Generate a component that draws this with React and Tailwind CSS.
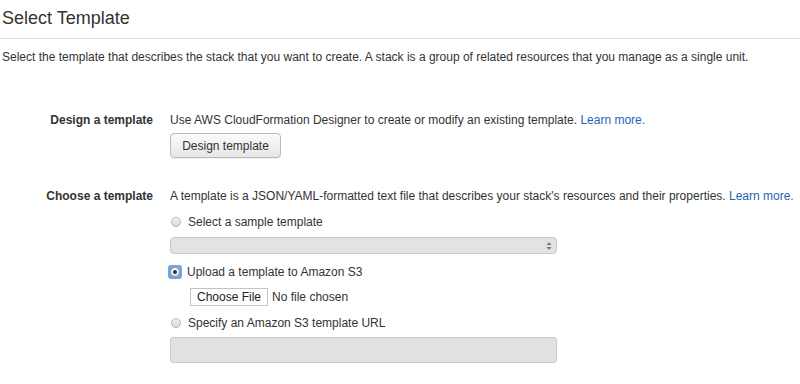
import React from "react";

const Radio = ({ checked }) => {
  if (checked) {
    return (
      <span className="flex items-center justify-center w-[14px] h-[14px] rounded-[3px] bg-[#6fa6e6] mr-[5px] -ml-[2px]">
        <span className="flex items-center justify-center w-[10px] h-[10px] rounded-full bg-gradient-to-b from-[#fdfdfd] to-[#e4e4e4] border border-[#9a9a9a]">
          <span className="w-[4px] h-[4px] rounded-full bg-[#333]"></span>
        </span>
      </span>
    );
  }
  return (
    <span className="w-[10px] h-[10px] rounded-full bg-gradient-to-b from-[#f4f4f4] to-[#d8d8d8] border border-[#b5b5b5] mr-[7px] ml-[1px]"></span>
  );
};

const App = () => {
  return (
    <div
      className="w-[800px] h-[384px] bg-white text-[#333] overflow-hidden"
      style={{ fontFamily: '"Liberation Sans", Arial, sans-serif' }}
    >
      <h1 className="text-[18px] leading-[22px] pt-[7px] pb-[9px] pl-[2px] border-b border-[#dcdcdc] text-[#333]">
        Select Template
      </h1>
      <p className="mt-[10px] pl-[2px] text-[12px] leading-[16px]">
        Select the template that describes the stack that you want to create. A stack is a group of related resources that you manage as a single unit.
      </p>

      <div className="grid grid-cols-[153px_1fr] gap-x-[17px] mt-[47px] text-[12px] leading-[16px]">
        <div className="text-right font-bold">Design a template</div>
        <div className="flex flex-col items-start">
          <div>
            Use AWS CloudFormation Designer to create or modify an existing template.{" "}
            <a className="text-[#1f64b8]">Learn more.</a>
          </div>
          <button className="mt-[5px] h-[25px] w-[111px] rounded-[4px] border border-[#b9b9b9] bg-gradient-to-b from-[#fbfbfb] to-[#e6e6e6] text-[12px] text-[#333] shadow-[0_1px_0_rgba(0,0,0,0.05)]">
            Design template
          </button>
        </div>

        <div className="text-right font-bold mt-[30px]">Choose a template</div>
        <div className="flex flex-col items-start mt-[30px]">
          <div>
            A template is a JSON/YAML-formatted text file that describes your stack's resources and their properties.{" "}
            <a className="text-[#1f64b8]">Learn more.</a>
          </div>

          <label className="flex items-center mt-[10px]">
            <Radio />
            <span>Select a sample template</span>
          </label>
          <div className="mt-[7px] h-[17px] w-[387px] rounded-[4px] border border-[#c9c9c9] bg-[#e3e3e3] flex items-center justify-end pr-[4px]">
            <svg width="6" height="10" viewBox="0 0 6 10">
              <path d="M3 1 L5.5 4 H0.5 Z" fill="#777" />
              <path d="M3 9 L5.5 6 H0.5 Z" fill="#777" />
            </svg>
          </div>

          <label className="flex items-center mt-[10px]">
            <Radio checked />
            <span>Upload a template to Amazon S3</span>
          </label>
          <div className="flex items-center mt-[8px] ml-[20px]">
            <button className="h-[18px] px-[6px] border border-[#c4c4c4] bg-white text-[12px] text-[#222] leading-none">
              Choose File
            </button>
            <span className="ml-[4px]">No file chosen</span>
          </div>

          <label className="flex items-center mt-[9px]">
            <Radio />
            <span>Specify an Amazon S3 template URL</span>
          </label>
          <div className="mt-[6px] h-[26px] w-[387px] rounded-[3px] border border-[#cbcbcb] bg-[#e2e2e2]"></div>
        </div>
      </div>
    </div>
  );
};

export default App;
